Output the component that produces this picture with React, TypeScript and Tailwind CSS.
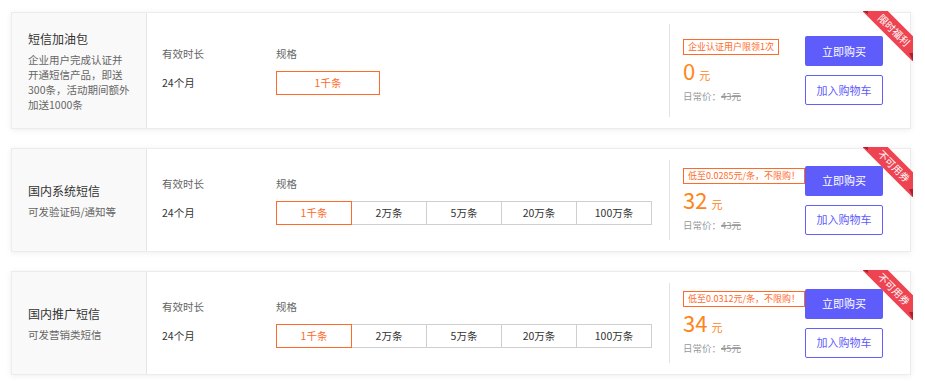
import React from "react";

type Product = {
    title: string;
    desc: string[];
    specs: string[];
    badge: string;
    price: string;
    orig: string;
    ribbon: string;
};

const products: Product[] = [
    {
        title: "短信加油包",
        desc: ["企业用户完成认证并", "开通短信产品，即送", "300条，活动期间额外", "加送1000条"],
        specs: ["1千条"],
        badge: "企业认证用户限领1次",
        price: "0",
        orig: "43",
        ribbon: "限时福利",
    },
    {
        title: "国内系统短信",
        desc: ["可发验证码/通知等"],
        specs: ["1千条", "2万条", "5万条", "20万条", "100万条"],
        badge: "低至0.0285元/条，不限购！",
        price: "32",
        orig: "43",
        ribbon: "不可用券",
    },
    {
        title: "国内推广短信",
        desc: ["可发营销类短信"],
        specs: ["1千条", "2万条", "5万条", "20万条", "100万条"],
        badge: "低至0.0312元/条，不限购！",
        price: "34",
        orig: "45",
        ribbon: "不可用券",
    },
];

const Ribbon = ({ text }: { text: string }) => (
    <div className="absolute -top-[2px] -right-[3px] w-[50px] h-[50px] overflow-hidden z-10 pointer-events-none">
        <div className="absolute left-[-7px] top-[10px] w-[76px] h-[18px] bg-[#ee4351] rotate-45 flex items-center justify-center text-white text-[10px] leading-none">
            {text}
        </div>
        <div className="absolute left-0 top-0 w-[5px] h-[3px] bg-[#a9202c] [clip-path:polygon(0_0,100%_0,100%_100%)]" />
        <div className="absolute right-0 top-[42px] w-[4px] h-[8px] bg-[#a9202c] [clip-path:polygon(0_0,100%_0,100%_100%)]" />
    </div>
);

const Card = ({ p }: { p: Product }) => {
    const single = p.specs.length === 1;
    return (
        <div className="relative flex w-[900px] min-h-[104px] bg-white border border-[#ececec] shadow-[0_1px_6px_rgba(0,0,0,0.07)]">
            <Ribbon text={p.ribbon} />

            {/* left info */}
            <div className="w-[135px] shrink-0 bg-[#f9f9f9] border-r border-[#e6e6e6] pl-[16px] pr-[6px] py-[16px] flex flex-col justify-center">
                <div className="text-[12px] leading-[20px] text-[#333]">{p.title}</div>
                <div className="mt-[3px] text-[10.5px] leading-[15px] text-[#666] whitespace-nowrap">
                    {p.desc.map((line, i) => (
                        <div key={i}>{line}</div>
                    ))}
                </div>
            </div>

            {/* middle */}
            <div className="w-[522px] shrink-0 pl-[15px] pr-[15px] flex items-center">
                <div className="w-[114px] flex flex-col gap-[9px]">
                    <div className="text-[10.5px] leading-[16px] text-[#666]">有效时长</div>
                    <div className="h-[24px] flex items-center text-[10.5px] text-[#333]">24个月</div>
                </div>
                <div className="flex flex-col gap-[9px]">
                    <div className="text-[10.5px] leading-[16px] text-[#666]">规格</div>
                    <div className="flex">
                        {p.specs.map((s, i) => (
                            <div
                                key={s}
                                className={`h-[24px] flex items-center justify-center text-[10.5px] border ${
                                    single ? "w-[104px]" : "w-[76px]"
                                } ${i > 0 ? "-ml-px" : ""} ${
                                    i === 0 ? "relative z-[1] border-[#ff6a28] text-[#ff6a28]" : "border-[#cfcfcf] text-[#333]"
                                }`}
                            >
                                {s}
                            </div>
                        ))}
                    </div>
                </div>
            </div>

            <div className="w-px my-[11px] bg-[#e3e3e3] shrink-0" />

            {/* right */}
            <div className="flex-1 pl-[13px] flex items-center">
                <div className="w-[122px] flex flex-col items-start">
                    <div className="h-[16px] px-[4px] border border-[#ff6a28] text-[#ff6a28] text-[9px] leading-[14px] whitespace-nowrap">
                        {p.badge}
                    </div>
                    <div className="h-[30px] flex items-baseline text-[#ff8417]">
                        <span className="text-[22px] leading-[30px]">{p.price}</span>
                        <span className="ml-[4px] text-[11px]">元</span>
                    </div>
                    <div className="mt-[4px] text-[9.5px] leading-[14px] text-[#999]">
                        日常价：<span className="line-through">{p.orig}元</span>
                    </div>
                </div>
                <div className="w-[78px] flex flex-col gap-[9px]">
                    <button className="h-[30px] bg-[#5e5cfb] text-white text-[11px] rounded-[2px]">立即购买</button>
                    <button className="h-[30px] border border-[#625ff8] text-[#5e5cfb] text-[11px] rounded-[2px] bg-white">
                        加入购物车
                    </button>
                </div>
            </div>
        </div>
    );
};

export default function App() {
    return (
        <div
            className="w-[925px] h-[383px] bg-white pl-[11px] pt-[12px] flex flex-col gap-[19px] overflow-hidden"
            style={{ fontFamily: '"Noto Sans CJK SC", "Noto Sans", sans-serif' }}
        >
            {products.map((p) => (
                <Card key={p.title} p={p} />
            ))}
        </div>
    );
}
